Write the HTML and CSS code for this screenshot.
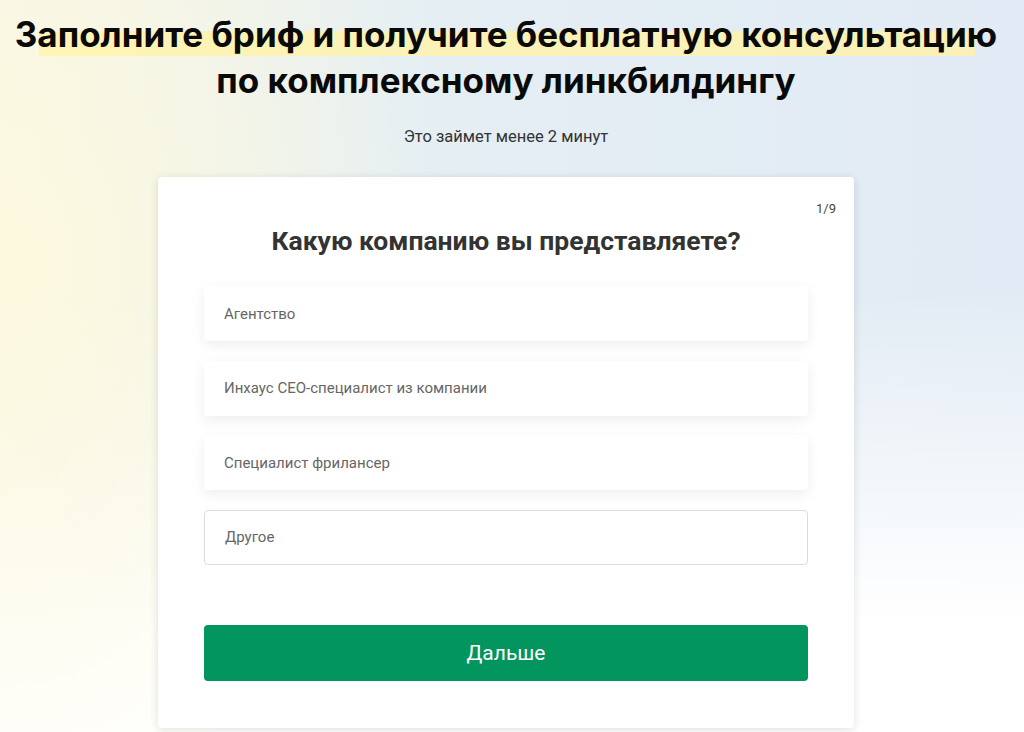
FILE: index.html
```html
<!DOCTYPE html>
<html lang="ru">
<head>
<meta charset="utf-8">
<title>Бриф</title>
<link rel="stylesheet" href="styles.css">
</head>
<body>
<main class="page">
  <h1 class="title"><span class="hl">Заполните бриф и получите бесплатную консультацию</span><br>по комплексному линкбилдингу</h1>
  <p class="sub">Это займет менее 2 минут</p>
  <section class="card">
    <div class="step">1/9</div>
    <h2 class="question">Какую компанию вы представляете?</h2>
    <div class="options">
      <div class="opt">Агентство</div>
      <div class="opt">Инхаус СЕО-специалист из компании</div>
      <div class="opt">Специалист фрилансер</div>
      <div class="opt opt-other">Другое</div>
    </div>
    <button class="next">Дальше</button>
  </section>
</main>
</body>
</html>
```
FILE: styles.css
```css
html, body {
  margin: 0;
  padding: 0;
}
body {
  width: 1024px;
  height: 732px;
  overflow: hidden;
  font-family: Roboto, "Liberation Sans", sans-serif;
  background:
    radial-gradient(ellipse 420px 600px at 0px 260px, rgba(252, 249, 222, 1) 0%, rgba(252, 249, 222, 0) 100%),
    linear-gradient(180deg, rgba(255,255,255,0) 0%, rgba(255,255,255,0) 40%, rgba(255,255,255,1) 85%),
    linear-gradient(90deg, #f7f6ea 0%, #e4eef3 45%, #e2ebf5 100%);
}
.page {
  width: 1012px;
  display: flex;
  flex-direction: column;
  align-items: center;
}
.title {
  margin: 11px 0 0;
  font-family: Inter, "Liberation Sans", sans-serif;
  font-weight: 700;
  font-size: 35px;
  line-height: 46px;
  color: #0a0a0a;
  text-align: center;
}
.hl {
  position: relative;
  z-index: 0;
}
.hl::before {
  content: "";
  position: absolute;
  left: 24px;
  right: 22px;
  top: 18px;
  height: 25px;
  background: #fff3a8;
  opacity: 0.8;
  z-index: -1;
}
.sub {
  margin: 23px 0 0;
  font-size: 16.5px;
  line-height: 22px;
  color: #333;
}
.card {
  margin-top: 29px;
  width: 696px;
  box-sizing: border-box;
  background: #fff;
  border-radius: 4px;
  box-shadow: 0 2px 10px rgba(0, 0, 0, 0.12);
  padding: 24px 46px 47px;
  display: flex;
  flex-direction: column;
}
.step {
  align-self: flex-end;
  margin-right: -28px;
  font-size: 13px;
  line-height: 16px;
  color: #444;
}
.question {
  margin: 8px 0 0;
  font-size: 26.5px;
  line-height: 32px;
  font-weight: 700;
  color: #333;
  text-align: center;
}
.options {
  margin-top: 29px;
  display: flex;
  flex-direction: column;
  gap: 19.5px;
}
.opt {
  height: 55px;
  box-sizing: border-box;
  display: flex;
  align-items: center;
  padding-left: 20px;
  font-size: 15px;
  color: #666;
  background: #fff;
  border-radius: 4px;
  box-shadow: 0 4px 14px rgba(0, 0, 0, 0.07);
}
.opt-other {
  box-shadow: none;
  border: 1px solid #dcdcdc;
}
.next {
  margin-top: 60px;
  height: 56px;
  border: 0;
  border-radius: 4px;
  background: #03955e;
  color: #fff;
  font-family: Roboto, "Liberation Sans", sans-serif;
  font-size: 21px;
  font-weight: 400;
  cursor: pointer;
}
```
